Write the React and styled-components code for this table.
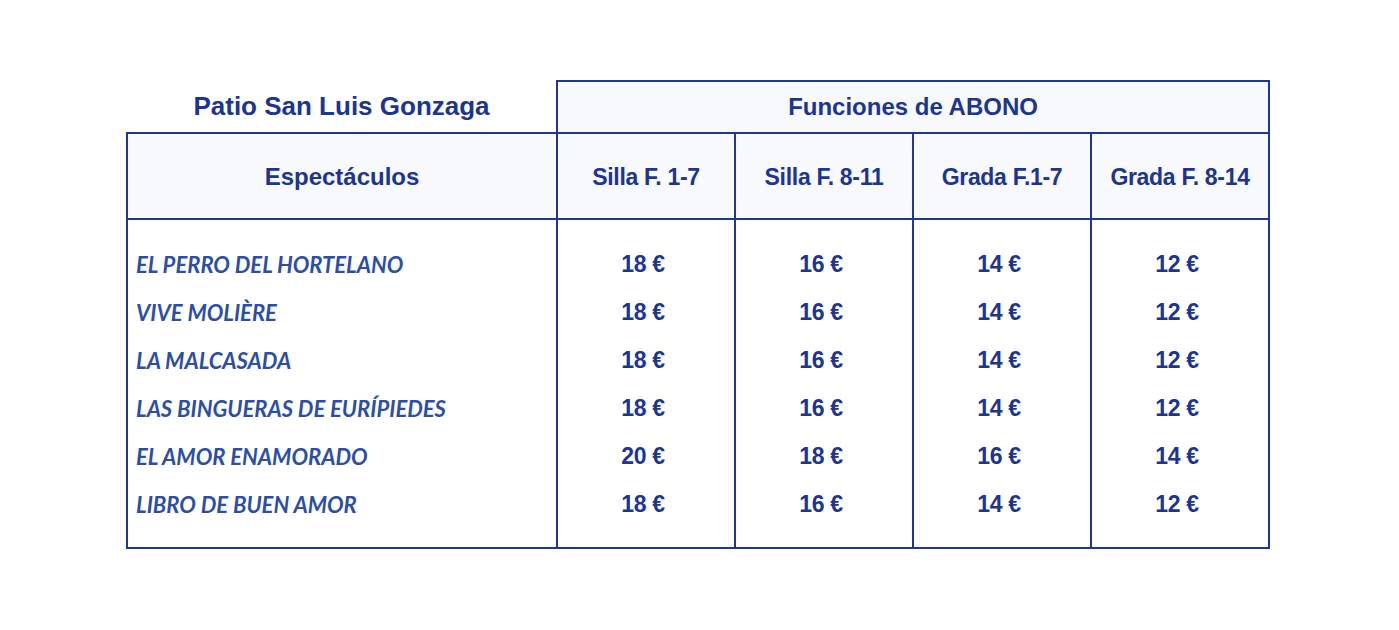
import React from "react";
import styled, { createGlobalStyle } from "styled-components";

const GlobalStyle = createGlobalStyle`
  body {
    margin: 0;
    background: #ffffff;
    font-family: "Liberation Sans", Arial, sans-serif;
  }
`;

const columns = ["Silla F. 1-7", "Silla F. 8-11", "Grada F.1-7", "Grada F. 8-14"];

const shows = [
  { name: "EL PERRO DEL HORTELANO", prices: [18, 16, 14, 12] },
  { name: "VIVE MOLIÈRE", prices: [18, 16, 14, 12] },
  { name: "LA MALCASADA", prices: [18, 16, 14, 12] },
  { name: "LAS BINGUERAS DE EURÍPIEDES", prices: [18, 16, 14, 12] },
  { name: "EL AMOR ENAMORADO", prices: [20, 18, 16, 14] },
  { name: "LIBRO DE BUEN AMOR", prices: [18, 16, 14, 12] },
];

function App() {
  return (
    <Page>
      <GlobalStyle />
      <Table>
        <colgroup>
          <Col $w={430} />
          {columns.map((c) => (
            <Col key={c} $w={178} />
          ))}
        </colgroup>
        <thead>
          <tr>
            <Title>Patio San Luis Gonzaga</Title>
            <GroupHead colSpan={4}>Funciones de ABONO</GroupHead>
          </tr>
          <tr>
            <ColHead $wide>Espectáculos</ColHead>
            {columns.map((c) => (
              <ColHead key={c}>{c}</ColHead>
            ))}
          </tr>
        </thead>
        <tbody>
          {shows.map((s, i) => (
            <Row key={s.name} $first={i === 0} $last={i === shows.length - 1}>
              <Name>{s.name}</Name>
              {s.prices.map((p, j) => (
                <Price key={j}>{p} €</Price>
              ))}
            </Row>
          ))}
        </tbody>
      </Table>
    </Page>
  );
}

const Page = styled.div`
  padding: 80px 0 0 126px;
`;

const Table = styled.table`
  border-collapse: collapse;
  table-layout: fixed;
  width: 1144px;
  color: #1b3590;
`;

const Col = styled.col`
  width: ${(p) => p.$w}px;
`;

const Title = styled.th`
  height: 50px;
  padding: 0;
  font-size: 26px;
  font-weight: bold;
  text-align: center;
  border: none;
`;

const GroupHead = styled.th`
  height: 50px;
  padding: 0;
  font-size: 24px;
  font-weight: bold;
  background: #f7f9fc;
  border: 2px solid #1f3692;
`;

const ColHead = styled.th`
  height: 82px;
  padding: 2px 0 0;
  font-size: ${(p) => (p.$wide ? "24px" : "23px")};
  font-weight: bold;
  letter-spacing: ${(p) => (p.$wide ? "0" : "-0.3px")};
  background: #f7f9fc;
  border: 2px solid #1f3692;
`;

const Row = styled.tr`
  td {
    height: 48px;
    padding-top: ${(p) => (p.$first ? "20px" : "0")};
    padding-bottom: ${(p) => (p.$last ? "19px" : "0")};
    border-left: 2px solid #1f3692;
    border-right: 2px solid #1f3692;
    border-bottom: ${(p) => (p.$last ? "2px solid #1f3692" : "none")};
  }
`;

const Name = styled.td`
  padding-left: 8px;
  font-family: Lato, "Open Sans", sans-serif;
  font-style: italic;
  font-weight: bold;
  font-size: 22px;
  color: #2c4ea3;
  text-align: left;
`;

const Price = styled.td`
  padding: 0 6px 0 0;
  font-weight: bold;
  font-size: 23px;
  letter-spacing: -0.3px;
  text-align: center;
`;

export default App;
